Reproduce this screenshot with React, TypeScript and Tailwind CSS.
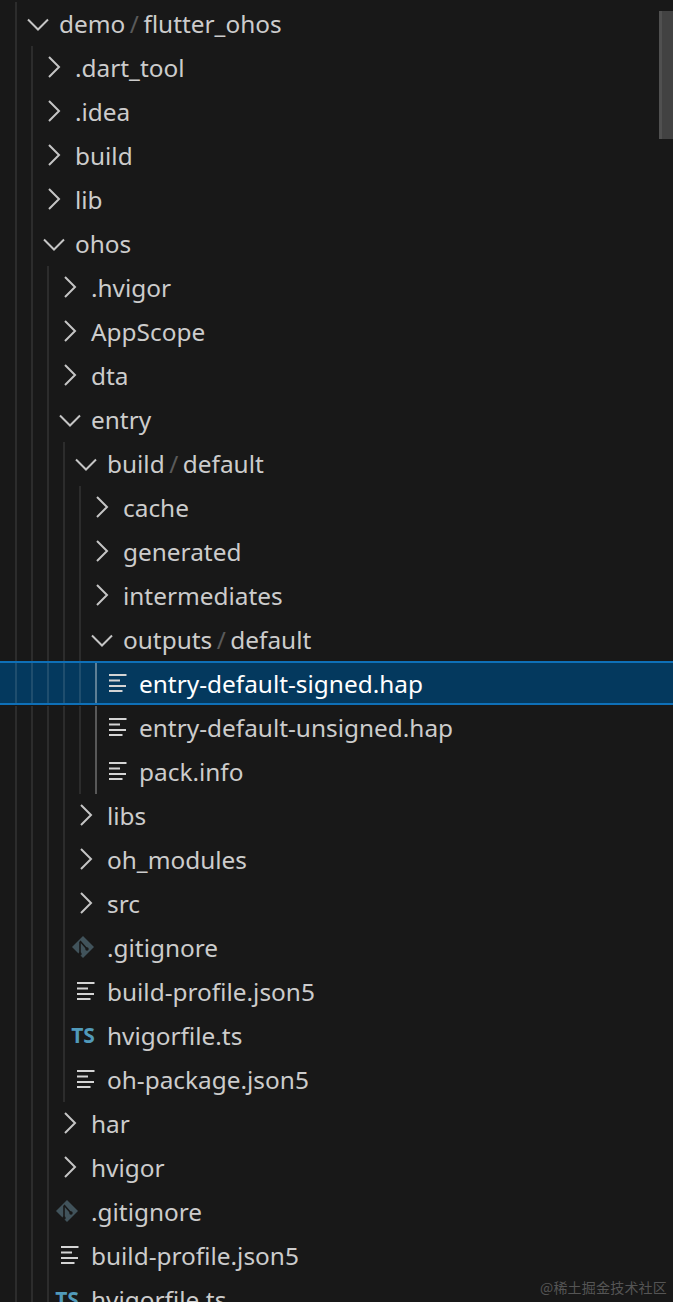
const FONT = "font-['Noto_Sans','Open_Sans',sans-serif]";

type Kind = "open" | "closed" | "file" | "git" | "ts";

type Row = {
  depth: number;
  kind: Kind;
  name: string;
  tail?: string;
  selected?: boolean;
  bright?: boolean;
};

const ROWS: Row[] = [
  { depth: 1, kind: "open", name: "demo", tail: "flutter_ohos" },
  { depth: 2, kind: "closed", name: ".dart_tool" },
  { depth: 2, kind: "closed", name: ".idea" },
  { depth: 2, kind: "closed", name: "build" },
  { depth: 2, kind: "closed", name: "lib" },
  { depth: 2, kind: "open", name: "ohos" },
  { depth: 3, kind: "closed", name: ".hvigor" },
  { depth: 3, kind: "closed", name: "AppScope" },
  { depth: 3, kind: "closed", name: "dta" },
  { depth: 3, kind: "open", name: "entry" },
  { depth: 4, kind: "open", name: "build", tail: "default" },
  { depth: 5, kind: "closed", name: "cache" },
  { depth: 5, kind: "closed", name: "generated" },
  { depth: 5, kind: "closed", name: "intermediates" },
  { depth: 5, kind: "open", name: "outputs", tail: "default" },
  { depth: 6, kind: "file", name: "entry-default-signed.hap", selected: true, bright: true },
  { depth: 6, kind: "file", name: "entry-default-unsigned.hap", bright: true },
  { depth: 6, kind: "file", name: "pack.info", bright: true },
  { depth: 4, kind: "closed", name: "libs" },
  { depth: 4, kind: "closed", name: "oh_modules" },
  { depth: 4, kind: "closed", name: "src" },
  { depth: 4, kind: "git", name: ".gitignore" },
  { depth: 4, kind: "file", name: "build-profile.json5" },
  { depth: 4, kind: "ts", name: "hvigorfile.ts" },
  { depth: 4, kind: "file", name: "oh-package.json5" },
  { depth: 3, kind: "closed", name: "har" },
  { depth: 3, kind: "closed", name: "hvigor" },
  { depth: 3, kind: "git", name: ".gitignore" },
  { depth: 3, kind: "file", name: "build-profile.json5" },
  { depth: 3, kind: "ts", name: "hvigorfile.ts" },
];

function Chevron({ open }: { open: boolean }) {
  return (
    <svg width="26" height="26" viewBox="0 0 26 26" fill="none" stroke="#c5c5c5" strokeWidth="2">
      {open ? <path d="M3 8.5 L13 18.5 L23 8.5" /> : <path d="M8 2 L18 12 L8 22" />}
    </svg>
  );
}

function LinesIcon() {
  return (
    <svg className="mb-[2px]" width="18" height="18" viewBox="0 0 18 18" fill="none" stroke="#d4d4d4" strokeWidth="2">
      <path d="M0 1h17.5M0 6.5h11M0 12h17M0 17h13.5" />
    </svg>
  );
}

function GitIcon() {
  return (
    <svg className="mb-[2px] -ml-[7px]" width="22" height="22" viewBox="0 0 22 22">
      <path d="M11 0 L22 11 L11 22 L0 11 Z" fill="#41535b" />
      <path d="M8 5 L15 13 M8 6 V18" stroke="#181818" strokeWidth="1.6" fill="none" />
      <circle cx="15" cy="13" r="1.7" fill="#181818" />
      <circle cx="8" cy="18" r="1.7" fill="#181818" />
    </svg>
  );
}

function RowIcon({ kind }: { kind: Kind }) {
  if (kind === "open" || kind === "closed") return <Chevron open={kind === "open"} />;
  if (kind === "git") return <GitIcon />;
  if (kind === "ts")
    return <span className="mb-[2px] -ml-[6px] text-[21px] font-bold leading-none text-[#519aba]">TS</span>;
  return <LinesIcon />;
}

function guideClass(row: Row, last: boolean) {
  if (row.selected) {
    return last
      ? "w-4 shrink-0 border-r-2 border-[#5e7f95]"
      : "w-4 shrink-0 border-r-2 border-[#1f4e6e]";
  }
  return row.bright && last
    ? "w-4 shrink-0 border-r-2 border-[#585858]"
    : "w-4 shrink-0 border-r-2 border-[#2c2c2c]";
}

function TreeRow({ row }: { row: Row }) {
  const guides = Array.from({ length: row.depth }, (_, i) => i);
  return (
    <div
      className={
        row.selected
          ? "relative flex h-[43px] mb-px items-stretch bg-[#04395e] pl-px text-white"
          : "relative flex h-[44px] items-stretch pl-px text-[#cccccc]"
      }
    >
      {row.selected && (
        <>
          <span className="absolute inset-x-0 -top-px h-[2px] bg-[#0e70b8]" />
          <span className="absolute inset-x-0 bottom-0 h-[2px] bg-[#0e70b8]" />
        </>
      )}
      {guides.map((i) => (
        <span key={i} className={guideClass(row, i === row.depth - 1)} />
      ))}
      <span className="flex w-[42px] shrink-0 items-center justify-center">
        <RowIcon kind={row.kind} />
      </span>
      <span
        className={
          row.selected
            ? "flex items-center whitespace-nowrap pt-px text-[24.4px] leading-none"
            : "flex items-center whitespace-nowrap text-[24.4px] leading-none"
        }
      >
        {row.name}
        {row.tail && (
          <>
            <span className="mx-[4.5px] text-[#5a5a5a]">/</span>
            {row.tail}
          </>
        )}
      </span>
    </div>
  );
}

export default function App() {
  return (
    <div className={`relative h-[1302px] w-[673px] overflow-hidden bg-[#181818] pt-[2px] ${FONT}`}>
      {ROWS.map((row, i) => (
        <TreeRow key={i} row={row} />
      ))}
      {/* scrollbar thumb */}
      <div className="absolute right-0 top-[11px] h-[128px] w-[14px] border-l-[3px] border-[#505050] bg-[#424242]" />
      {/* site watermark */}
      <div className="absolute bottom-[5px] right-[6px] font-['Noto_Sans_CJK_SC',sans-serif] text-[14px] leading-[20px] tracking-[0.2px] text-[#555555]">
        @稀土掘金技术社区
      </div>
    </div>
  );
}
